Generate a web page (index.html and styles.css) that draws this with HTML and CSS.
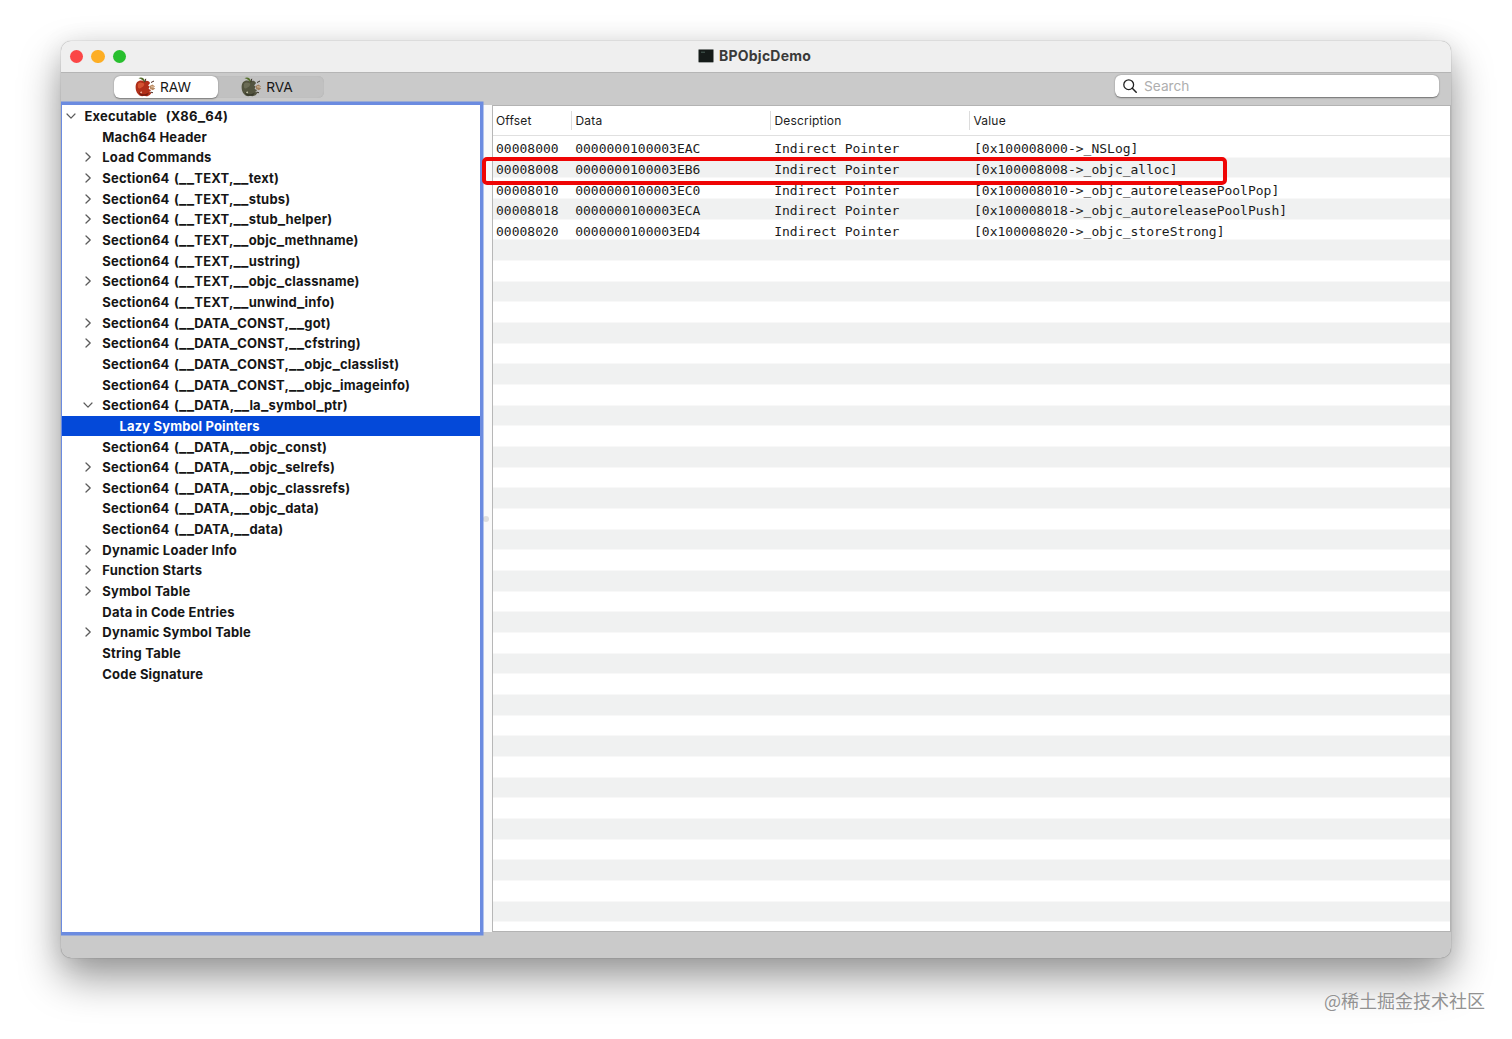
FILE: index.html
```html
<!DOCTYPE html>
<html lang="en">
<head>
<meta charset="utf-8">
<title>BPObjcDemo</title>
<link rel="stylesheet" href="styles.css">
</head>
<body>
<svg class="defs" aria-hidden="true">
  <symbol id="right" viewBox="0 0 10 10"><path d="M3 1 7.2 5 3 9" fill="none" stroke="#5c5c5c" stroke-width="1.3" stroke-linecap="round" stroke-linejoin="round"/></symbol>
  <symbol id="down" viewBox="0 0 10 10"><path d="M1 3 5 7.2 9 3" fill="none" stroke="#5c5c5c" stroke-width="1.2" stroke-linecap="round" stroke-linejoin="round"/></symbol>
</svg>
<main class="window">
  <header class="titlebar">
    <div class="lights"><i class="light close"></i><i class="light minimize"></i><i class="light zoom"></i></div>
    <svg class="doc-icon" viewBox="0 0 16 14"><rect x=".3" y=".3" width="15.4" height="13.2" rx=".8" fill="#555a58"/><rect x="1" y="1" width="14" height="12" fill="#151b19"/><path d="M3 3.2h4" stroke="#567067" stroke-width=".8"/></svg>
    <h1 class="title">BPObjcDemo</h1>
  </header>
  <div class="toolbar">
    <div class="segments">
      <div class="segment active">
        <svg class="apple" viewBox="0 0 21 20">
          <path d="M9.5 4.5C7 3 4 3.1 2 5.3-.3 8.5.4 14 3 17c1.8 2.2 4 2.5 6 1.8 2.5.9 4.5.4 6.200-1.400l1.600-2-2.500-.4 1.800-2-2.500-1 1-2.500-1.500-1 2-2.500C13.500 3.300 11.500 3.300 9.500 4.500z" fill="#b02f19"/>
          <path d="M3 7c2-3 5-1 6-.5 1 2-2 4-4 5-2 .5-2.500-2-2-4.500z" fill="#d55331"/>
          <path d="M4 15c3 3 6 3 10 .5l-2 3-3 .2c-3 .6-5-1-5-3.700z" fill="#74190f"/>
          <path d="M5 15.200l1.400-1 .8 1.500-1.200.8z" fill="#f2b09a"/>
          <path d="M9.500 5.500C8 3.500 6 1.500 3.500 1.200 6-.2 9.500.7 10 4.500z" fill="#536c2b"/><path d="M9.800 5.200 10.800 1.800" stroke="#3c2516" stroke-width="1"/>
          <path d="m14.500 9 3-1.500 2.500 2-1.500 1 1.800 1-2.500 1.800-2.800-1.500z" fill="#b88962"/><path d="m16 5.500 3-1.500M15.500 15l2.500.8" stroke="#4b2a20" stroke-width="1"/>
          <path d="m16 9.800 3 .2" stroke="#f5ddc0" stroke-width=".8"/>
        </svg><span>RAW</span>
      </div>
      <div class="segment">
        <svg class="apple" viewBox="0 0 21 20">
          <path d="M9.500 4.500C7 3 4 3.100 2 5.300-.3 8.500.4 14 3 17c1.800 2.200 4 2.500 6 1.800 2.500.9 4.500.4 6.200-1.400l1.600-2-2.500-.4 1.800-2-2.500-1 1-2.500-1.500-1 2-2.500C13.500 3.300 11.500 3.300 9.500 4.500z" fill="#53543f"/>
          <path d="M3 7c2-3 5-1 6-.5 1 2-2 4-4 5-2 .5-2.500-2-2-4.500z" fill="#6b6c56"/>
          <path d="M4 15c3 3 6 3 10 .5l-2 3-3 .2c-3 .6-5-1-5-3.700z" fill="#37392a"/>
          <path d="M5 15.200l1.400-1 .8 1.500-1.200.8z" fill="#c6c6ac"/>
          <path d="M9.500 5.500C8 3.500 6 1.500 3.500 1.200 6-.2 9.500.7 10 4.500z" fill="#56702d"/><path d="M9.800 5.200 10.800 1.800" stroke="#30271c" stroke-width="1"/>
          <path d="m14.500 9 3-1.500 2.500 2-1.500 1 1.800 1-2.500 1.800-2.800-1.500z" fill="#a0805e"/><path d="m16 5.500 3-1.500M15.500 15l2.500.8" stroke="#3a3427" stroke-width="1"/>
          <path d="m16 9.800 3 .2" stroke="#e4cfb2" stroke-width=".8"/>
        </svg><span>RVA</span>
      </div>
    </div>
    <div class="search">
      <svg class="lens" viewBox="0 0 14 14"><circle cx="5.700" cy="5.700" r="4.900" fill="none" stroke="#222" stroke-width="1.300"/><path d="m9.300 9.300 3.900 3.900" stroke="#222" stroke-width="1.500" stroke-linecap="round"/></svg>
      <span>Search</span>
    </div>
  </div>
  <div class="content">
    <nav class="tree">
      <div class="node section root"><svg class="arrow"><use href="#down"/></svg><span>Executable&nbsp; (X86<u>_</u>64)</span></div>
      <div class="node"><span>Mach64 Header</span></div>
      <div class="node"><svg class="arrow"><use href="#right"/></svg><span>Load Commands</span></div>
      <div class="node section"><svg class="arrow"><use href="#right"/></svg><span>Section64 (<u>__</u>TEXT,<u>__</u>text)</span></div>
      <div class="node section"><svg class="arrow"><use href="#right"/></svg><span>Section64 (<u>__</u>TEXT,<u>__</u>stubs)</span></div>
      <div class="node section"><svg class="arrow"><use href="#right"/></svg><span>Section64 (<u>__</u>TEXT,<u>__</u>stub<u>_</u>helper)</span></div>
      <div class="node section"><svg class="arrow"><use href="#right"/></svg><span>Section64 (<u>__</u>TEXT,<u>__</u>objc<u>_</u>methname)</span></div>
      <div class="node section"><span>Section64 (<u>__</u>TEXT,<u>__</u>ustring)</span></div>
      <div class="node section"><svg class="arrow"><use href="#right"/></svg><span>Section64 (<u>__</u>TEXT,<u>__</u>objc<u>_</u>classname)</span></div>
      <div class="node section"><span>Section64 (<u>__</u>TEXT,<u>__</u>unwind<u>_</u>info)</span></div>
      <div class="node section"><svg class="arrow"><use href="#right"/></svg><span>Section64 (<u>__</u>DATA<u>_</u>CONST,<u>__</u>got)</span></div>
      <div class="node section"><svg class="arrow"><use href="#right"/></svg><span>Section64 (<u>__</u>DATA<u>_</u>CONST,<u>__</u>cfstring)</span></div>
      <div class="node section"><span>Section64 (<u>__</u>DATA<u>_</u>CONST,<u>__</u>objc<u>_</u>classlist)</span></div>
      <div class="node section"><span>Section64 (<u>__</u>DATA<u>_</u>CONST,<u>__</u>objc<u>_</u>imageinfo)</span></div>
      <div class="node section"><svg class="arrow"><use href="#down"/></svg><span>Section64 (<u>__</u>DATA,<u>__</u>la<u>_</u>symbol<u>_</u>ptr)</span></div>
      <div class="node leaf selected"><span>Lazy Symbol Pointers</span></div>
      <div class="node section"><span>Section64 (<u>__</u>DATA,<u>__</u>objc<u>_</u>const)</span></div>
      <div class="node section"><svg class="arrow"><use href="#right"/></svg><span>Section64 (<u>__</u>DATA,<u>__</u>objc<u>_</u>selrefs)</span></div>
      <div class="node section"><svg class="arrow"><use href="#right"/></svg><span>Section64 (<u>__</u>DATA,<u>__</u>objc<u>_</u>classrefs)</span></div>
      <div class="node section"><span>Section64 (<u>__</u>DATA,<u>__</u>objc<u>_</u>data)</span></div>
      <div class="node section"><span>Section64 (<u>__</u>DATA,<u>__</u>data)</span></div>
      <div class="node"><svg class="arrow"><use href="#right"/></svg><span>Dynamic Loader Info</span></div>
      <div class="node"><svg class="arrow"><use href="#right"/></svg><span>Function Starts</span></div>
      <div class="node"><svg class="arrow"><use href="#right"/></svg><span>Symbol Table</span></div>
      <div class="node"><span>Data in Code Entries</span></div>
      <div class="node"><svg class="arrow"><use href="#right"/></svg><span>Dynamic Symbol Table</span></div>
      <div class="node"><span>String Table</span></div>
      <div class="node"><span>Code Signature</span></div>
    </nav>
    <div class="splitter"><i class="grip"></i></div>
    <section class="table">
      <div class="row head"><span>Offset</span><span>Data</span><span>Description</span><span>Value</span></div>
      <div class="rows">
        <div class="row"><span>00008000</span><span>0000000100003EAC</span><span>Indirect Pointer</span><span>[0x100008000-&gt;_NSLog]</span></div>
        <div class="row"><span>00008008</span><span>0000000100003EB6</span><span>Indirect Pointer</span><span>[0x100008008-&gt;_objc_alloc]</span></div>
        <div class="row"><span>00008010</span><span>0000000100003EC0</span><span>Indirect Pointer</span><span>[0x100008010-&gt;_objc_autoreleasePoolPop]</span></div>
        <div class="row"><span>00008018</span><span>0000000100003ECA</span><span>Indirect Pointer</span><span>[0x100008018-&gt;_objc_autoreleasePoolPush]</span></div>
        <div class="row"><span>00008020</span><span>0000000100003ED4</span><span>Indirect Pointer</span><span>[0x100008020-&gt;_objc_storeStrong]</span></div>
      </div>
    </section>
  </div>
</main>
<div class="highlight"></div>
<div class="watermark">@稀土掘金技术社区</div>
</body>
</html>
```
FILE: styles.css
```css
* { box-sizing: border-box; }
body {
  margin: 0;
  height: 1039px;
  padding: 41px 61px 0;
  position: relative;
  overflow: hidden;
  background: #fff;
  font-family: Inter, "Liberation Sans", sans-serif;
  color: #161616;
}
.defs { position: absolute; width: 0; height: 0; }
.window {
  width: 1390px;
  height: 917px;
  display: flex;
  flex-direction: column;
  border-radius: 10px;
  overflow: hidden;
  background: #cacaca;
  box-shadow: 0 0 1px rgba(0,0,0,.5), 0 20px 42px rgba(0,0,0,.4), 0 2px 26px rgba(0,0,0,.08);
}
.titlebar {
  height: 32px;
  flex: none;
  display: flex;
  align-items: center;
  background: #efefef;
  border-bottom: 1px solid #b5b5b5;
}
.lights { display: flex; gap: 8.5px; padding-left: 8.5px; width: 637px; flex: none; }
.light { width: 13.3px; height: 13.3px; border-radius: 50%; }
.close { background: #fb4646; }
.minimize { background: #fdae24; }
.zoom { background: #28bf2e; }
.doc-icon { width: 16px; height: 14px; margin: 0 5px 1px 0; }
.title { margin: 0 0 2px; font-size: 14px; font-weight: 700; letter-spacing: .23px; color: #3a3a3a; }
.toolbar {
  height: 32px;
  flex: none;
  display: flex;
  align-items: flex-start;
  justify-content: space-between;
  padding: 3px 12px 0 53px;
}
.segments {
  display: flex;
  width: 210px;
  height: 22px;
  border-radius: 6px;
  background: #c1c1c1;
  box-shadow: inset 0 0 1px #aaa;
}
.segment {
  flex: 1;
  display: flex;
  align-items: center;
  gap: 4px;
  padding-left: 23.5px;
  font-size: 13.7px;
}
.segment span { padding-bottom: 1px; }
.segment.active { padding-left: 21px; background: #fff; border-radius: 6px; box-shadow: 0 .5px 1.5px rgba(0,0,0,.4); }
.apple { width: 21px; height: 20px; margin-top: -1px; }
.search {
  width: 324px;
  height: 22px;
  margin-top: -1px;
  display: flex;
  align-items: center;
  gap: 7.5px;
  padding-left: 7.5px;
  border-radius: 6px;
  background: #fff;
  box-shadow: 0 .5px 1.5px rgba(0,0,0,.45);
  color: #aeaeae;
  font-size: 13.7px;
}
.lens { width: 14px; height: 14px; }
.content { height: 827px; flex: none; display: flex; padding-left: 1px; background: #fff; }
.tree {
  width: 418px;
  flex: none;
  padding-top: .7px;
  background: #fff;
  box-shadow: 0 0 0 3.5px #6b8be0;
  z-index: 1;
}
.node {
  height: 20.67px;
  display: flex;
  align-items: center;
  padding-left: 40.3px;
  font-size: 13px;
  font-weight: 700;
  letter-spacing: .2px;
  white-space: nowrap;
}
.node u { font-size: 15.5px; line-height: 1px; text-decoration: none; }
.section { word-spacing: 1.1px; }
.arrow { width: 10px; height: 10px; margin: 0 9px 0 -19px; flex: none; }
.root { padding-left: 22.5px; }
.leaf { padding-left: 57.5px; letter-spacing: .15px; }
.selected { background: #0449d9; color: #fff; }
.splitter { width: 11.5px; flex: none; display: flex; align-items: center; padding-left: 3px; background: #fafafa; }
.grip { width: 6px; height: 6px; border-radius: 50%; background: #dedede; }
.table { flex: 1; border: 1px solid #b3b3b3; border-left-color: #b7b7b7; border-right-width: 1.5px; border-left-width: 1.5px; }
.row {
  height: 20.67px;
  display: grid;
  grid-template-columns: 78.5px 199px 199px 1fr;
  align-items: center;
  white-space: pre;
  font-family: "DejaVu Sans Mono", monospace;
  font-size: 13px;
  color: #1c1c1c;
}
.row span { padding-left: 4.2px; }
.row span:first-child { padding-left: 3.5px; }
.row span:last-child { padding-left: 5px; }
.head {
  height: 30px;
  border-bottom: 1px solid #e0e0e0;
  font-family: Inter, "Liberation Sans", sans-serif;
  font-size: 12px;
  letter-spacing: .18px;
}
.head span, .head span:last-child { height: 19px; padding-left: 3.5px; line-height: 19px; border-left: 1px solid #dcdcdc; }
.head span:first-child { border-color: transparent; padding-left: 2.5px; }
.rows {
  height: 795px;
  padding-top: 2.5px;
  background: repeating-linear-gradient(#fff 0 20.67px, #f0f1f1 20.67px 41.34px) 0 .5px;
}
.highlight {
  position: absolute;
  left: 481.5px;
  top: 157px;
  width: 745.5px;
  height: 28px;
  border: 4.5px solid #ef0505;
  border-radius: 5px;
  z-index: 2;
}
.watermark {
  position: absolute;
  left: 1324px;
  top: 988px;
  font-family: "Noto Sans CJK SC", sans-serif;
  font-size: 18px;
  line-height: 24px;
  white-space: nowrap;
  color: #929292;
  text-shadow: 0 0 1px #fff;
}
```
